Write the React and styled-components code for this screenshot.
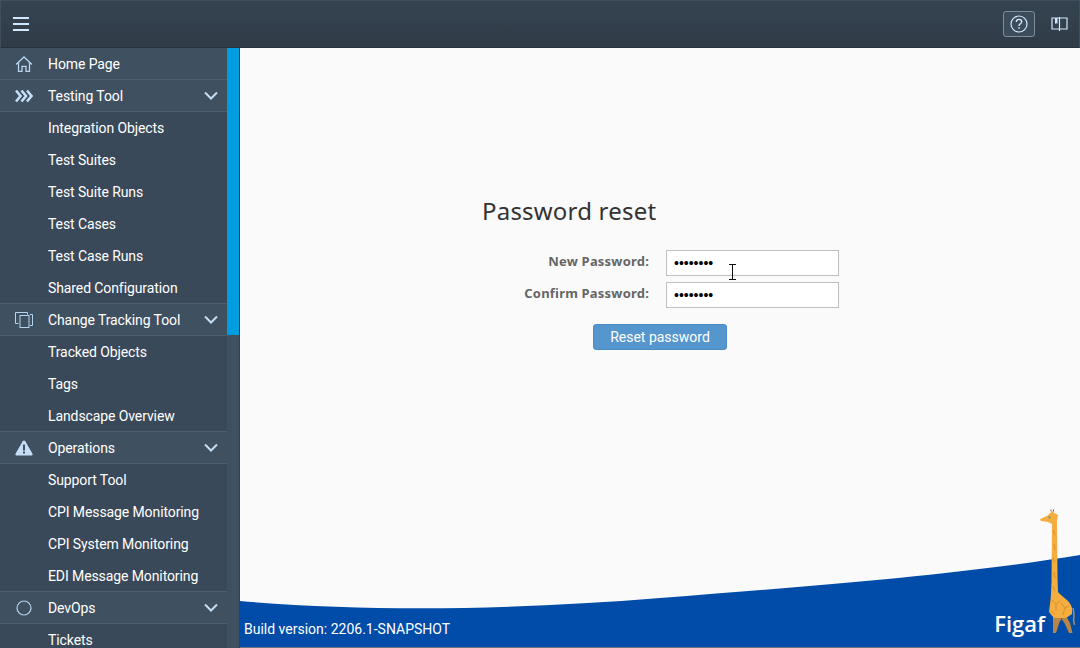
import styled, { createGlobalStyle } from "styled-components";

const GlobalStyle = createGlobalStyle`
  html, body {
    margin: 0;
    height: 100%;
    overflow: hidden;
  }
  body {
    font-family: Roboto, "Liberation Sans", sans-serif;
  }
  * {
    box-sizing: border-box;
  }
`;

const menu = [
  { label: "Home Page", icon: "home", divided: true },
  { label: "Testing Tool", icon: "chevrons", open: true, divided: true },
  { label: "Integration Objects" },
  { label: "Test Suites" },
  { label: "Test Suite Runs" },
  { label: "Test Cases" },
  { label: "Test Case Runs" },
  { label: "Shared Configuration", divided: true },
  { label: "Change Tracking Tool", icon: "copy", open: true, divided: true },
  { label: "Tracked Objects" },
  { label: "Tags" },
  { label: "Landscape Overview", divided: true },
  { label: "Operations", icon: "alert", open: true, divided: true },
  { label: "Support Tool" },
  { label: "CPI Message Monitoring" },
  { label: "CPI System Monitoring" },
  { label: "EDI Message Monitoring", divided: true },
  { label: "DevOps", icon: "circle", open: true, divided: true },
  { label: "Tickets" },
];

function NavIcon({ name }) {
  if (name === "home") {
    return (
      <svg width="18" height="16" viewBox="0 0 18 16" fill="none" stroke="#b5d4f0" strokeWidth="1.300">
        <path d="M1 8.500 9 1l8 7.500M3.500 6.500v8.800h3.500v-5h4v5h3.500V6.500" />
      </svg>
    );
  }
  if (name === "chevrons") {
    return (
      <svg width="18" height="14" viewBox="0 0 18 14" fill="none" stroke="#c4def5" strokeWidth="2.600">
        <path d="M1 1.500 5.500 7 1 12.500M6.500 1.500 11 7l-4.500 5.500M12 1.500 16.500 7 12 12.500" />
      </svg>
    );
  }
  if (name === "copy") {
    return (
      <svg width="18" height="16" viewBox="0 0 18 16" fill="none" stroke="#b5d4f0" strokeWidth="1">
        <path d="M3.500 11.500h-3v-11h12v2M15 13.500h2.500v-11H15" />
        <rect x="5" y="3.500" width="9" height="12" />
      </svg>
    );
  }
  if (name === "alert") {
    return (
      <svg width="18" height="16" viewBox="0 0 18 16">
        <path d="M9 .5c.6 0 1 .3 1.300.8l7.200 12.500c.4.800-.1 1.700-1 1.700H1.500c-.9 0-1.400-.9-1-1.700L7.700 1.300C8 .8 8.400.5 9 .5z" fill="#c4def5" />
        <path d="M8 4.500h2v6H8zM8 11.500h2v2H8z" fill="#3f5060" />
      </svg>
    );
  }
  return (
    <svg width="16" height="16" viewBox="0 0 16 16" fill="none" stroke="#b5d4f0" strokeWidth="1.200">
      <circle cx="8" cy="8" r="7" />
    </svg>
  );
}

function Giraffe() {
  return (
    <svg width="44" height="128" viewBox="0 0 44 128">
      <path d="M29 106l5 9 2.500 10H33l-4-9-4-6zM17 108v17h3l3.500-11 3-4z" fill="#b5854a" />
      <path d="M4 11l7-3 4-3.500 1-2 1.500 2L22 7l-1 6 .5 57 .5 14c4 5 12 8 14 16v6l-6 4H18l-5-6 1-8c1-6 1-11 1.500-21L16 16l-4-2-7-1z" fill="#f4ad3f" />
      <path d="M17 22l2 5M18 36l1 6M17 50l2 5M18 64l1 6M17 78l2 5M16 92l4 4 4-3M20 96v7M25 95l4 5 4-2M29 100l-2 7M15 103l4 3" stroke="#d98f2b" strokeWidth="1" fill="none" />
      <path d="M37 100c1 5 1.500 8 .5 12l1 5" stroke="#a88d63" strokeWidth="1.500" fill="none" />
      <circle cx="13.500" cy="9.500" r="1" fill="#4d9a7d" />
      <path d="M15 3.500v-2M17.500 3.500v-2" stroke="#b0503c" strokeWidth="1" />
    </svg>
  );
}

const Page = styled.div`
  width: 1080px;
  height: 648px;
  display: flex;
  flex-direction: column;
  overflow: hidden;
`;

const TopBar = styled.header`
  height: 48px;
  flex: none;
  display: flex;
  align-items: center;
  justify-content: space-between;
  padding: 0 12px;
  background: linear-gradient(#354350, #303c48);
  border: 1px solid #3f4f5e;
  border-bottom: 1px solid #29333d;
`;

const MenuButton = styled.button`
  width: 16px;
  height: 14px;
  padding: 0;
  background: none;
  border: 0;
  border-top: 2px solid #d1e8ff;
  border-bottom: 2px solid #d1e8ff;
  position: relative;
  &::after {
    content: "";
    position: absolute;
    left: 0;
    right: 0;
    top: 4px;
    height: 2px;
    background: #d1e8ff;
  }
`;

const TopActions = styled.div`
  display: flex;
  align-items: center;
  gap: 16px;
  margin-right: -2px;
`;

const HelpButton = styled.button`
  width: 32px;
  height: 26px;
  padding: 0;
  display: flex;
  align-items: center;
  justify-content: center;
  background: #3d4c5a;
  border: 1px solid #7d8c9b;
  border-radius: 3px;
`;

const BookButton = styled.button`
  width: 18px;
  height: 16px;
  padding: 0;
  display: flex;
  background: none;
  border: 0;
`;

const Body = styled.div`
  flex: 1;
  min-height: 0;
  display: flex;
`;

const Sidebar = styled.nav`
  width: 240px;
  flex: none;
  display: flex;
  overflow: hidden;
`;

const NavList = styled.ul`
  width: 227px;
  flex: none;
  margin: 0;
  padding: 0;
  list-style: none;
  background: #3a4959;
`;

const NavRow = styled.li`
  height: 32px;
  display: flex;
  align-items: center;
  color: #fff;
  font-size: 14px;
  letter-spacing: -0.1px;
  background: ${(p) => (p.$group ? "#3f5060" : "#3a4959")};
  border-bottom: 1px solid ${(p) => (p.$divided ? "#4d5e6e" : "transparent")};
`;

const IconSlot = styled.span`
  width: 48px;
  flex: none;
  display: flex;
  justify-content: center;
`;

const RowLabel = styled.span`
  flex: 1;
  white-space: nowrap;
`;

const Chevron = styled.svg`
  margin-right: 9px;
`;

const ScrollTrack = styled.div`
  width: 13px;
  flex: none;
  background: #3f5060;
  border-right: 1px solid #33404c;
`;

const ScrollThumb = styled.div`
  height: 287px;
  background: #009de0;
`;

const Main = styled.main`
  flex: 1;
  position: relative;
  background: #fafafa;
  border-bottom: 1px solid #6b7680;
  overflow: hidden;
  display: flex;
  flex-direction: column;
  align-items: flex-start;
  padding: 146px 0 0 242px;
`;

const Title = styled.h1`
  margin: 0 0 23px;
  font-family: "Noto Sans", sans-serif;
  font-size: 24px;
  font-weight: 400;
  line-height: 33px;
  letter-spacing: 0.2px;
  color: #333;
`;

const FormGrid = styled.form`
  margin: 0;
  display: grid;
  grid-template-columns: 167px 173px;
  column-gap: 17px;
  row-gap: 6px;
  align-items: center;
  position: relative;
`;

const FieldLabel = styled.label`
  text-align: right;
  font-family: "Noto Sans", sans-serif;
  font-size: 13px;
  font-weight: 700;
  color: #666;
  letter-spacing: 0.2px;
  margin-bottom: 4px;
`;

const PasswordInput = styled.input`
  width: 173px;
  height: 26px;
  padding: 0 7px;
  border: 1px solid #bfbfbf;
  background: #fff;
  color: #000;
  font-size: 14px;
  font-family: "Liberation Sans", sans-serif;
  outline: none;
`;

const SubmitRow = styled.div`
  margin: 16px 0 0 111px;
`;

const ResetButton = styled.button`
  width: 134px;
  height: 26px;
  padding: 0;
  background: #5496cd;
  border: 1px solid #4a8bc2;
  border-radius: 3px;
  color: #fff;
  font-family: inherit;
  font-size: 14px;
`;

const TextCursor = styled.svg`
  position: absolute;
  left: 247px;
  top: 14px;
`;

const Wave = styled.svg`
  position: absolute;
  left: 0;
  bottom: 0;
`;

const BuildVersion = styled.div`
  position: absolute;
  left: 4px;
  bottom: 10px;
  color: #fff;
  font-size: 14px;
`;

const BrandName = styled.span`
  position: absolute;
  right: 35px;
  bottom: 9px;
  color: #fff;
  font-family: "Open Sans", sans-serif;
  font-size: 22px;
  font-weight: 600;
  line-height: 30px;
`;

const GiraffeSlot = styled.div`
  position: absolute;
  right: 0;
  bottom: 11px;
  display: flex;
`;

export default function App() {
  return (
    <>
      <GlobalStyle />
      <Page>
        <TopBar>
          <MenuButton aria-label="Menu" />
          <TopActions>
            <HelpButton aria-label="Help">
              <svg width="20" height="20" viewBox="0 0 20 20" fill="none" stroke="#d1e8ff" strokeWidth="1.200">
                <circle cx="10" cy="10" r="8" />
                <path d="M7.300 8c0-1.700 1.200-2.600 2.700-2.600S12.700 6.300 12.700 7.800c0 2-2.700 2-2.700 4.200" strokeWidth="1.400" />
                <path d="M10 13.300v1.500" strokeWidth="1.500" />
              </svg>
            </HelpButton>
            <BookButton aria-label="Guide">
              <svg width="17" height="16" viewBox="0 0 17 16" fill="none" stroke="#d1e8ff" strokeWidth="1.200">
                <path d="M1 2h7.500v11H1zM8.500 2H16v11H8.500zM8.500 1v14" />
                <path d="M4 2h2.500v6l-1.250-1L4 8z" fill="#d1e8ff" stroke="none" />
              </svg>
            </BookButton>
          </TopActions>
        </TopBar>
        <Body>
          <Sidebar>
            <NavList>
              {menu.map((item) => (
                <NavRow key={item.label} $group={Boolean(item.icon)} $divided={item.divided}>
                  <IconSlot>{item.icon && <NavIcon name={item.icon} />}</IconSlot>
                  <RowLabel>{item.label}</RowLabel>
                  {item.open && (
                    <Chevron width="14" height="9" viewBox="0 0 14 9" fill="none" stroke="#c4def5" strokeWidth="2">
                      <path d="M1 1.500l6 6 6-6" />
                    </Chevron>
                  )}
                </NavRow>
              ))}
            </NavList>
            <ScrollTrack>
              <ScrollThumb />
            </ScrollTrack>
          </Sidebar>
          <Main>
            <Wave width="840" height="92" viewBox="0 0 840 92">
              <path d="M0 46C130 57 270 55 420 43 590 30 730 18 840 0V92H0z" fill="#004ca8" />
            </Wave>
            <Title>Password reset</Title>
            <FormGrid>
              <FieldLabel htmlFor="new-password">New Password:</FieldLabel>
              <PasswordInput id="new-password" type="password" value="password" readOnly />
              <FieldLabel htmlFor="confirm-password">Confirm Password:</FieldLabel>
              <PasswordInput id="confirm-password" type="password" value="password" readOnly />
              <TextCursor width="7" height="16" viewBox="0 0 7 16" fill="none" stroke="#111" strokeWidth="1">
                <path d="M0 .5h7M0 15.500h7M3.500 .5v15" />
              </TextCursor>
            </FormGrid>
            <SubmitRow>
              <ResetButton type="button">Reset password</ResetButton>
            </SubmitRow>
            <BuildVersion>Build version: 2206.1-SNAPSHOT</BuildVersion>
            <BrandName>Figaf</BrandName>
            <GiraffeSlot>
              <Giraffe />
            </GiraffeSlot>
          </Main>
        </Body>
      </Page>
    </>
  );
}
